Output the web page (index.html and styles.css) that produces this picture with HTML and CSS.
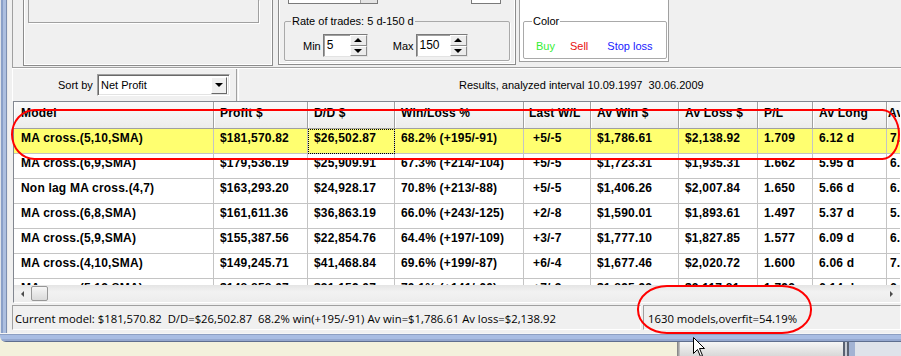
FILE: index.html
```html
<!DOCTYPE html>
<html lang="en">
  <head>
    <meta charset="utf-8" />
    <title>Optimizer results</title>
    <link rel="stylesheet" href="styles.css">
  </head>
  <body>
    <div class="screen">
      <div class="window">
        <div class="frame-left"></div>
        <div class="client">
          <div class="top">
            <div class="panel panel-a"><div class="inner-box"></div></div>
            <div class="panel panel-b">
              <div class="stubs">
                <div class="stub stub-combo"><div class="stub-btn"></div></div>
                <div class="stub stub-edit"></div>
              </div>
              <div class="group group-rate">
                <div class="group-title">Rate of trades: 5 d-150 d</div>
                <div class="group-row">
                  <span class="lbl">Min</span>
                  <div class="spin spin-min">
                    <span class="val">5</span>
                    <span class="spin-btns"><span class="up"></span><span class="down"></span></span>
                  </div>
                  <span class="lbl lbl-max">Max</span>
                  <div class="spin spin-max">
                    <span class="val">150</span>
                    <span class="spin-btns"><span class="up"></span><span class="down"></span></span>
                  </div>
                </div>
              </div>
            </div>
            <div class="panel panel-c">
              <div class="group group-color">
                <div class="group-title">Color</div>
                <div class="group-row">
                  <span class="buy">Buy</span>
                  <span class="sell">Sell</span>
                  <span class="stop">Stop loss</span>
                </div>
              </div>
            </div>
          </div>

          <div class="toolbar">
            <span class="sort-label">Sort by</span>
            <div class="combo">
              <span class="combo-text">Net Profit</span>
              <span class="combo-btn"></span>
            </div>
            <span class="separator"></span>
            <span class="results">Results, analyzed interval 10.09.1997  30.06.2009</span>
          </div>

          <div class="grid">
            <div class="rows">
              <div class="row head">
                <div>Model</div><div>Profit $</div><div>D/D $</div><div>Win/Loss %</div><div>Last W/L</div>
                <div>Av Win $</div><div>Av Loss $</div><div>P/L</div><div>Av Long</div><div>Av Short</div>
              </div>
              <div class="row current">
                <div>MA cross.(5,10,SMA)</div><div>$181,570.82</div><div class="focus">$26,502.87</div><div>68.2% (+195/-91)</div><div class="wl">+5/-5</div>
                <div>$1,786.61</div><div>$2,138.92</div><div>1.709</div><div>6.12 d</div><div class="last">7.31 d</div>
              </div>
              <div class="row">
                <div>MA cross.(6,9,SMA)</div><div>$179,536.19</div><div>$25,909.91</div><div>67.3% (+214/-104)</div><div class="wl">+5/-5</div>
                <div>$1,723.31</div><div>$1,935.31</div><div>1.662</div><div>5.95 d</div><div class="last">6.87 d</div>
              </div>
              <div class="row">
                <div>Non lag MA cross.(4,7)</div><div>$163,293.20</div><div>$24,928.17</div><div>70.8% (+213/-88)</div><div class="wl">+5/-5</div>
                <div>$1,406.26</div><div>$2,007.84</div><div>1.650</div><div>5.66 d</div><div class="last">6.42 d</div>
              </div>
              <div class="row">
                <div>MA cross.(6,8,SMA)</div><div>$161,611.36</div><div>$36,863.19</div><div>66.0% (+243/-125)</div><div class="wl">+2/-8</div>
                <div>$1,590.01</div><div>$1,893.61</div><div>1.497</div><div>5.37 d</div><div class="last">5.91 d</div>
              </div>
              <div class="row">
                <div>MA cross.(5,9,SMA)</div><div>$155,387.56</div><div>$22,854.76</div><div>64.4% (+197/-109)</div><div class="wl">+3/-7</div>
                <div>$1,777.10</div><div>$1,827.85</div><div>1.577</div><div>6.09 d</div><div class="last">6.73 d</div>
              </div>
              <div class="row">
                <div>MA cross.(4,10,SMA)</div><div>$149,245.71</div><div>$41,468.84</div><div>69.6% (+199/-87)</div><div class="wl">+6/-4</div>
                <div>$1,677.46</div><div>$2,020.72</div><div>1.600</div><div>6.06 d</div><div class="last">7.12 d</div>
              </div>
              <div class="row">
                <div>MA cross.(5,12,SMA)</div><div>$148,858.07</div><div>$31,159.07</div><div>70.1% (+141/-60)</div><div class="wl">+7/-3</div>
                <div>$1,895.92</div><div>$2,117.81</div><div>1.792</div><div>6.14 d</div><div class="last">6.55 d</div>
              </div>
            </div>
            <div class="hscroll">
              <span class="sb-btn sb-left"></span>
              <span class="sb-thumb"></span>
              <span class="sb-track"></span>
              <span class="sb-btn sb-right"></span>
            </div>
          </div>

          <div class="statusbar">
            <div class="status-cell status-main">Current model: $181,570.82  D/D=$26,502.87  68.2% win(+195/-91) Av win=$1,786.61 Av loss=$2,138.92</div>
            <div class="status-cell status-count">1630 models,overfit=54.19%</div>
          </div>
        </div>
        <div class="frame-bottom"></div>
      </div>

      <div class="desktop">
        <div class="desk-left"></div>
        <div class="desk-edge"></div>
        <div class="desk-mid"></div>
        <div class="desk-frame"></div>
      </div>

      <!-- hand-drawn highlights over the screenshot -->
      <div class="mark mark-row"></div>
      <div class="mark mark-status"></div>
      <svg class="cursor" width="13" height="21" viewBox="0 0 13 21">
        <path d="M0.5 0.5 L0.5 16.5 L4.5 12.5 L7.5 19.5 L9.5 18.5 L6.5 11.5 L11.5 11.5 Z" fill="#fff" stroke="#000" stroke-width="1" />
      </svg>
    </div>
  </body>
</html>
```

FILE: styles.css
```css
html,
body {
  margin: 0;
  padding: 0;
}
body {
  width: 901px;
  height: 356px;
  overflow: hidden;
  font: 11px "Liberation Sans", Arial, sans-serif;
  color: #000;
  background: #f3f1dc;
}
.screen {
  position: relative;
  width: 901px;
  height: 356px;
  overflow: hidden;
  display: flex;
  flex-direction: column;
}

/* window frame */
.window {
  display: grid;
  grid-template-columns: 8px 893px;
  grid-template-rows: 333px 9px;
}
.frame-left {
  background: linear-gradient(to right, #dfe3ea 0 1px, #8aa0c8 1px 3px, #adbfe0 3px 6px, #7d8fb0 6px 7px, #e9e9e9 7px);
}
.frame-bottom {
  grid-column: 1 / 3;
  background: linear-gradient(#f6f6f6 0 1px, #8d9fc2 1px 2px, #a9bde3 2px 6px, #95a8cf 6px 8px, #5f6f8f 8px);
  border-bottom-left-radius: 6px;
}
.client {
  background: #f0f0f0;
  padding-left: 4px;
  display: flex;
  flex-direction: column;
  min-width: 0;
}

/* top panels */
.top {
  height: 67px;
  border-left: 1px solid #a0a0a0;
  border-bottom: 1px solid #a0a0a0;
  display: flex;
  align-items: flex-start;
  padding-left: 10px;
}
.panel {
  box-sizing: border-box;
  border: 1px solid #8c8c8c;
  border-top: 0;
  box-shadow: inset 1px 0 #fff, inset -1px -1px #fff;
}
.panel-a {
  width: 250px;
  height: 66px;
  padding-left: 4px;
}
.inner-box {
  box-sizing: border-box;
  width: 231px;
  height: 23px;
  border: 1px solid #a0a0a0;
  border-top: 0;
  box-shadow: 1px 1px #fff;
}
.panel-b {
  width: 238px;
  height: 65px;
  margin-left: 5px;
}
.panel-c {
  width: 150px;
  height: 62px;
  margin-left: 3px;
  background: #fff;
  border-color: #a0a0a0;
  box-shadow: none;
}
.stubs {
  display: flex;
  height: 4px;
  padding-left: 9px;
}
.stub {
  box-sizing: border-box;
  height: 4px;
  background: #fff;
  border: 1px solid #7a7a7a;
  border-top: 0;
}
.stub-combo {
  width: 90px;
  display: flex;
  justify-content: flex-end;
}
.stub-btn {
  width: 16px;
  background: #e4e4e4;
  border-left: 1px solid #a0a0a0;
}
.stub-edit {
  width: 30px;
  margin-left: 93px;
}

/* group boxes */
.group {
  border: 1px solid #a9a9a9;
  border-radius: 2px;
  box-shadow: 1px 1px #fff;
}
.group-title {
  width: fit-content;
  margin: -7px 0 0 6px;
  padding: 0 1px;
  line-height: 13px;
  background: #f0f0f0;
}
.group-row {
  display: flex;
  align-items: center;
  height: 23px;
  margin-top: 6px;
}
.group-rate {
  margin: 17px 5px 0 5px;
  padding-bottom: 3px;
}
.group-rate .group-row {
  padding-left: 18px;
}
.lbl {
  margin-right: 2px;
}
.lbl-max {
  margin-left: 25px;
}
.spin {
  box-sizing: border-box;
  height: 23px;
  display: flex;
  background: #fff;
  border: 1px solid;
  border-color: #7a7a7a #e3e3e3 #e3e3e3 #7a7a7a;
  box-shadow: inset 1px 1px #a0a0a0;
}
.spin-min {
  width: 45px;
}
.spin-max {
  width: 52px;
}
.val {
  flex: 1;
  padding: 2px 0 0 3px;
  font-size: 12px;
  line-height: 16px;
}
.spin-btns {
  width: 17px;
  display: flex;
  flex-direction: column;
}
.spin-btns span {
  flex: 1;
  display: flex;
  align-items: center;
  justify-content: center;
  background: #ececec;
  border: 1px solid;
  border-color: #fff #8c8c8c #8c8c8c #fff;
}
.up::before,
.down::before {
  content: "";
  border-left: 4px solid transparent;
  border-right: 4px solid transparent;
}
.up::before {
  border-bottom: 4px solid #000;
}
.down::before {
  border-top: 4px solid #000;
}
.group-color {
  margin: 21px 1px 0 3px;
  padding-bottom: 1px;
}
.group-color .group-title {
  margin-left: 8px;
  background: #fff;
}
.group-color .group-row {
  padding-left: 12px;
}
.buy {
  color: #33ee33;
}
.sell {
  color: #e81010;
  margin-left: 15px;
}
.stop {
  color: #1a1aff;
  margin-left: 19px;
}

/* sort toolbar */
.toolbar {
  height: 32px;
  border-top: 1px solid #fff;
  border-left: 1px solid #fff;
  display: flex;
  align-items: center;
}
.sort-label {
  width: 39px;
  margin-left: 45px;
}
.combo {
  box-sizing: border-box;
  width: 133px;
  height: 22px;
  display: flex;
  align-items: center;
  background: #fff;
  border: 1px solid;
  border-color: #a0a0a0 #fff #fff #a0a0a0;
  box-shadow: inset 1px 1px #696969, inset -1px -1px #e3e3e3;
}
.combo-text {
  flex: 1;
  padding-left: 3px;
}
.combo-btn {
  box-sizing: border-box;
  width: 16px;
  height: 17px;
  margin-right: 2px;
  display: flex;
  align-items: center;
  justify-content: center;
  background: #f0f0f0;
  border: 1px solid;
  border-color: #fff #696969 #696969 #fff;
}
.combo-btn::before {
  content: "";
  border-left: 4px solid transparent;
  border-right: 4px solid transparent;
  border-top: 4px solid #000;
}
.separator {
  align-self: stretch;
  width: 1px;
  margin-left: 6px;
  border-left: 1px solid #a0a0a0;
  border-right: 1px solid #fff;
}
.results {
  margin-left: 220px;
  white-space: pre;
}

/* results grid */
.grid {
  box-sizing: border-box;
  height: 202px;
  margin-left: 1px;
  border: 1px solid;
  border-color: #828790 #fff #fff #828790;
  background: #fff;
}
.rows {
  height: 183px;
  overflow: hidden;
}
.row {
  display: grid;
  grid-template-columns: 200px 94px 87px 129px 67px 88px 79px 55px 74px 80px;
  font: bold 12px "Liberation Sans", Arial, sans-serif;
  letter-spacing: 0.2px;
  white-space: nowrap;
}
.row > div {
  box-sizing: border-box;
  height: 25px;
  padding: 2px 0 0 6px;
  line-height: 14px;
  overflow: hidden;
  border-right: 1px solid #c4c4c4;
  border-bottom: 1px solid #c4c4c4;
}
.row > div:first-child {
  padding-left: 7px;
}
.row > .wl {
  padding-left: 9px;
}
.row > .last {
  padding-left: 3px;
}
.head > div {
  height: 27px;
  padding-top: 4px;
  background: linear-gradient(#fafafa, #ececec);
  border-color: #a0a0a0;
  box-shadow: inset 1px 0 #fff;
}
.head > div:nth-child(5) {
  padding-left: 5px;
}
.head > div:last-child {
  padding-left: 1px;
}
.current > div {
  background: #ffff70;
}
.current > .focus {
  outline: 1px dotted #000;
  outline-offset: -1px;
}

.hscroll {
  height: 17px;
  display: flex;
  background: linear-gradient(#e4e4e4, #f2f2f2 40%, #ececec);
}
.sb-btn {
  width: 17px;
  display: flex;
  align-items: center;
  justify-content: center;
}
.sb-left::before,
.sb-right::before {
  content: "";
  border-top: 3px solid transparent;
  border-bottom: 3px solid transparent;
}
.sb-left::before {
  border-right: 3px solid #4d4d4d;
}
.sb-right::before {
  border-left: 3px solid #4d4d4d;
}
.sb-thumb {
  box-sizing: border-box;
  width: 17px;
  margin: 1px 0;
  border: 1px solid #979797;
  border-radius: 2px;
  background: linear-gradient(#f6f6f6, #dadada);
}
.sb-track {
  flex: 1;
}

/* status bar */
.statusbar {
  height: 30px;
  display: flex;
  padding: 2px 0 3px;
  box-sizing: border-box;
  font: 11.3px "Open Sans", "Liberation Sans", sans-serif;
}
.status-cell {
  box-sizing: border-box;
  display: flex;
  align-items: center;
  padding-top: 1px;
  white-space: pre;
  border: 1px solid;
  border-color: #a0a0a0 #fff #fff #a0a0a0;
}
.status-main {
  width: 629px;
  padding-left: 2px;
}
.status-count {
  flex: 1;
  margin-left: 2px;
  padding-left: 4px;
}

/* strip of desktop under the window */
.desktop {
  flex: 1;
  display: flex;
}
.desk-left {
  width: 677px;
  background: #f3f1dc;
}
.desk-edge {
  width: 3px;
  background: linear-gradient(to right, #7c7c7c, #c8c8c8);
}
.desk-mid {
  width: 163px;
  background: linear-gradient(#f6f6f6, #d8d8d8);
}
.desk-frame {
  flex: 1;
  background: linear-gradient(to right, #5a6272 0 2px, #c8ccd4 2px 4px, #5a6272 4px 6px, #a3b3d3 6px 12px, #dfe3ea 12px);
}

/* red marker ellipses and mouse pointer */
.mark {
  position: absolute;
  border: 2px solid #f00;
}
.mark-row {
  left: 11px;
  top: 109px;
  width: 885px;
  height: 47px;
  border-radius: 24px 18px 18px 24px / 26px;
}
.mark-status {
  left: 637px;
  top: 285px;
  width: 171px;
  height: 45px;
  border-radius: 30px / 24px;
}
.cursor {
  position: absolute;
  left: 693px;
  top: 337px;
}
```
